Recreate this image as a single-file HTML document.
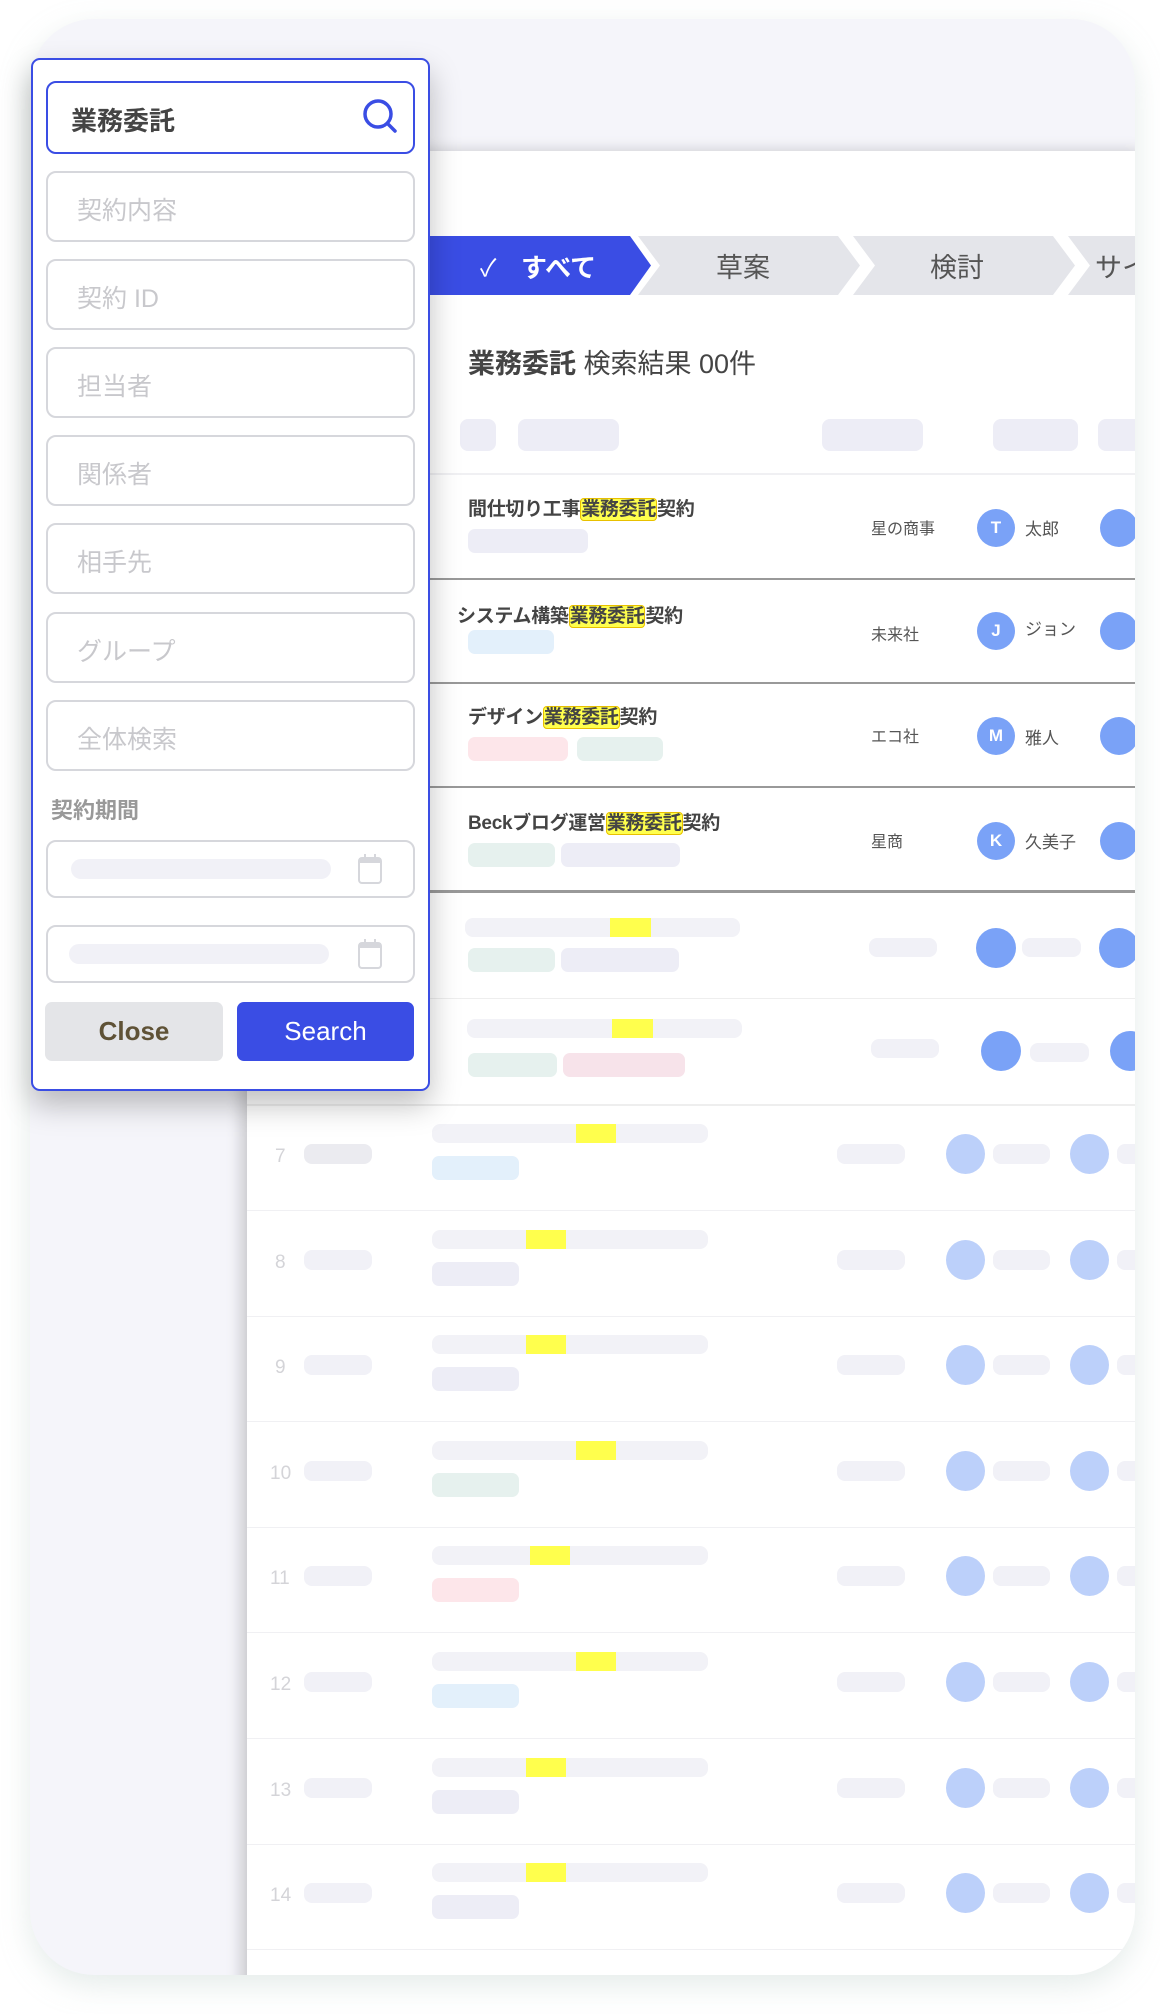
<!DOCTYPE html>
<html><head><meta charset="utf-8"><style>
*{margin:0;padding:0;box-sizing:border-box}
body{width:1160px;height:2014px;background:#fff;position:relative;overflow:hidden;font-family:"Liberation Sans","Noto Sans CJK JP",sans-serif}
.a{position:absolute}
.card{left:30px;top:19px;width:1105px;height:1956px;border-radius:64px;background:#f5f5fa;overflow:hidden;box-shadow:0 10px 30px rgba(180,200,195,.35)}
.panel{left:217px;top:132px;width:900px;height:1900px;background:#fff;box-shadow:-6px 0 14px rgba(0,0,0,.18)}
.pill{position:absolute;background:#f1f1f7;border-radius:8px}
.bar{position:absolute;background:#f2f2f7;border-radius:8px;height:19px}
.yl{position:absolute;background:#ffff4d;height:19px;top:0}
.tag{position:absolute;border-radius:7px;height:24px}
.circ{position:absolute;border-radius:50%}
.fld{position:absolute;left:46px;width:369px;height:71px;border:2px solid #d6d7dc;border-radius:10px;font-size:25px;color:#c8c8cc;padding:18px 0 0 29px}
.t{position:absolute;font-size:19px;font-weight:bold;color:#444;letter-spacing:-0.3px}
.hl{background:#ffff4d;border:1.5px solid #e8c000;border-radius:4px}
.co{position:absolute;font-size:16px;color:#555}
.av{position:absolute;width:38px;height:38px;border-radius:50%;background:#7aa2f7;color:#fff;font-weight:bold;font-size:17px;text-align:center;line-height:38px}
.nm{position:absolute;font-size:17px;color:#555}
.num{position:absolute;font-size:19px;color:#d4d4d8}
</style></head><body>
<div class="a card">
 <div class="a panel"></div>
</div>
<div class="a" style="left:30px;top:19px;width:1105px;height:1956px;border-radius:64px;overflow:hidden">
 <div class="a" style="left:-30px;top:-19px;width:1160px;height:2014px">
  <svg class="a" style="left:0;top:0" width="1160" height="320">
   <polygon points="430,236 630,236 651,265.5 630,295 430,295" fill="#3a4de4"/>
   <polygon points="638,236 838,236 860,265.5 838,295 638,295 660,265.5" fill="#e4e5ea"/>
   <polygon points="853,236 1053,236 1075,265.5 1053,295 853,295 875,265.5" fill="#e4e5ea"/>
   <polygon points="1068,236 1268,236 1290,265.5 1268,295 1068,295 1090,265.5" fill="#e4e5ea"/>
   <text x="480" y="276" font-size="24" fill="#fff" font-family="Liberation Sans,Noto Sans CJK JP,sans-serif">✓</text>
   <text x="521" y="277" font-size="26" font-weight="bold" fill="#fff" font-family="Liberation Sans,Noto Sans CJK JP,sans-serif">すべて</text>
   <text x="716" y="277" font-size="27" fill="#555" font-family="Liberation Sans,Noto Sans CJK JP,sans-serif">草案</text>
   <text x="930" y="277" font-size="27" fill="#555" font-family="Liberation Sans,Noto Sans CJK JP,sans-serif">検討</text>
   <text x="1095" y="277" font-size="27" fill="#555" font-family="Liberation Sans,Noto Sans CJK JP,sans-serif">サイン</text>
  </svg>
  <div class="a" style="left:468px;top:342px;font-size:27px;color:#444"><b>業務委託</b> 検索結果 00件</div>
  <div class="pill" style="left:460px;top:419px;width:36px;height:32px;background:#ededf6"></div>
  <div class="pill" style="left:518px;top:419px;width:101px;height:32px;background:#ededf6"></div>
  <div class="pill" style="left:822px;top:419px;width:101px;height:32px;background:#ededf6"></div>
  <div class="pill" style="left:993px;top:419px;width:85px;height:32px;background:#ededf6"></div>
  <div class="pill" style="left:1098px;top:419px;width:60px;height:32px;background:#ededf6"></div>
  <div class="a" style="left:430px;top:473px;width:710px;height:2px;background:#f0f0f3"></div>

  <div class="t" style="left:468px;top:494px">間仕切り工事<span class="hl">業務委託</span>契約</div>
  <div class="tag" style="left:468px;top:529px;width:120px;background:#ededf6"></div>
  <div class="co" style="left:871px;top:515px">星の商事</div>
  <div class="av" style="left:977px;top:509px">T</div>
  <div class="nm" style="left:1025px;top:515px">太郎</div>
  <div class="circ" style="left:1100px;top:509px;width:38px;height:38px;background:#7aa2f7"></div>
  <div class="a" style="left:430px;top:578px;width:710px;height:1.5px;background:#999"></div>

  <div class="t" style="left:457px;top:601px">システム構築<span class="hl">業務委託</span>契約</div>
  <div class="tag" style="left:468px;top:630px;width:86px;background:#e3f0fb"></div>
  <div class="co" style="left:871px;top:621px">未来社</div>
  <div class="av" style="left:977px;top:612px">J</div>
  <div class="nm" style="left:1025px;top:615px">ジョン</div>
  <div class="circ" style="left:1100px;top:612px;width:38px;height:38px;background:#7aa2f7"></div>
  <div class="a" style="left:430px;top:682px;width:710px;height:1.5px;background:#999"></div>

  <div class="t" style="left:468px;top:702px">デザイン<span class="hl">業務委託</span>契約</div>
  <div class="tag" style="left:468px;top:737px;width:100px;background:#fde6ea"></div>
  <div class="tag" style="left:577px;top:737px;width:86px;background:#e6f1ee"></div>
  <div class="co" style="left:871px;top:723px">エコ社</div>
  <div class="av" style="left:977px;top:717px">M</div>
  <div class="nm" style="left:1025px;top:724px">雅人</div>
  <div class="circ" style="left:1100px;top:717px;width:38px;height:38px;background:#7aa2f7"></div>
  <div class="a" style="left:430px;top:786px;width:710px;height:1.5px;background:#999"></div>

  <div class="t" style="left:468px;top:808px">Beckブログ運営<span class="hl">業務委託</span>契約</div>
  <div class="tag" style="left:468px;top:843px;width:87px;background:#e6f1ee"></div>
  <div class="tag" style="left:561px;top:843px;width:119px;background:#ededf6"></div>
  <div class="co" style="left:871px;top:828px">星商</div>
  <div class="av" style="left:977px;top:822px">K</div>
  <div class="nm" style="left:1025px;top:828px">久美子</div>
  <div class="circ" style="left:1100px;top:822px;width:38px;height:38px;background:#7aa2f7"></div>
  <div class="a" style="left:430px;top:890px;width:710px;height:3px;background:#999"></div>

  <div class="bar" style="left:465px;top:918px;width:275px"><div class="yl" style="left:145px;width:41px"></div></div>
  <div class="tag" style="left:468px;top:948px;width:87px;background:#e6f1ee"></div>
  <div class="tag" style="left:561px;top:948px;width:118px;background:#ededf6"></div>
  <div class="pill" style="left:869px;top:938px;width:68px;height:19px"></div>
  <div class="circ" style="left:976px;top:928px;width:40px;height:40px;background:#7aa2f7"></div>
  <div class="pill" style="left:1022px;top:938px;width:59px;height:19px"></div>
  <div class="circ" style="left:1099px;top:928px;width:40px;height:40px;background:#7aa2f7"></div>
  <div class="a" style="left:430px;top:998px;width:710px;height:1px;background:#eee"></div>
  <div class="bar" style="left:467px;top:1019px;width:275px"><div class="yl" style="left:145px;width:41px"></div></div>
  <div class="tag" style="left:468px;top:1053px;width:89px;background:#e6f1ee"></div>
  <div class="tag" style="left:563px;top:1053px;width:122px;background:#f7e3ea"></div>
  <div class="pill" style="left:871px;top:1039px;width:68px;height:19px"></div>
  <div class="circ" style="left:981px;top:1031px;width:40px;height:40px;background:#7aa2f7"></div>
  <div class="pill" style="left:1030px;top:1043px;width:59px;height:19px"></div>
  <div class="circ" style="left:1110px;top:1031px;width:40px;height:40px;background:#7aa2f7"></div>
  <div class="a" style="left:247px;top:1104px;width:890px;height:2px;background:#eee"></div>
  <div id="rows"></div>
 </div>
</div>

<div class="a" style="left:31px;top:58px;width:399px;height:1033px;background:#fff;border:2px solid #3a4de4;border-radius:9px;box-shadow:0 14px 30px rgba(0,0,0,.25)"></div>
<div class="a" style="left:46px;top:81px;width:369px;height:73px;border:2px solid #3a4de4;border-radius:10px;font-size:26px;font-weight:bold;color:#444;padding:18px 0 0 23px">業務委託</div>
<svg class="a" style="left:360px;top:96px" width="40" height="40" viewBox="0 0 40 40"><circle cx="18" cy="18" r="13" fill="none" stroke="#3a4de4" stroke-width="3.5"/><line x1="27.5" y1="27.5" x2="35" y2="35" stroke="#3a4de4" stroke-width="3.5" stroke-linecap="round"/></svg>
<div class="fld" style="top:171px">契約内容</div>
<div class="fld" style="top:259px">契約 ID</div>
<div class="fld" style="top:347px">担当者</div>
<div class="fld" style="top:435px">関係者</div>
<div class="fld" style="top:523px">相手先</div>
<div class="fld" style="top:612px">グループ</div>
<div class="fld" style="top:700px">全体検索</div>
<div class="a" style="left:51px;top:793px;font-size:22px;font-weight:bold;color:#999">契約期間</div>
<div class="fld" style="top:840px;height:58px"></div>
<div class="pill" style="left:71px;top:859px;width:260px;height:20px;border-radius:10px"></div>
<div class="fld" style="top:925px;height:58px"></div>
<div class="pill" style="left:69px;top:944px;width:260px;height:20px;border-radius:10px"></div>
<svg class="a" style="left:357px;top:852px" width="26" height="34" viewBox="0 0 26 34"><rect x="2" y="6" width="22" height="25" rx="3" fill="none" stroke="#d6d7dc" stroke-width="2"/><line x1="8" y1="2" x2="8" y2="10" stroke="#d6d7dc" stroke-width="2"/><line x1="18" y1="2" x2="18" y2="10" stroke="#d6d7dc" stroke-width="2"/><rect x="2" y="6" width="22" height="5" fill="#d6d7dc"/></svg>
<svg class="a" style="left:357px;top:937px" width="26" height="34" viewBox="0 0 26 34"><rect x="2" y="6" width="22" height="25" rx="3" fill="none" stroke="#d6d7dc" stroke-width="2"/><line x1="8" y1="2" x2="8" y2="10" stroke="#d6d7dc" stroke-width="2"/><line x1="18" y1="2" x2="18" y2="10" stroke="#d6d7dc" stroke-width="2"/><rect x="2" y="6" width="22" height="5" fill="#d6d7dc"/></svg>
<div class="a" style="left:45px;top:1002px;width:178px;height:59px;background:#e4e5e8;border-radius:7px;font-size:26px;font-weight:bold;color:#5f5236;text-align:center;line-height:59px">Close</div>
<div class="a" style="left:237px;top:1002px;width:177px;height:59px;background:#3a4de4;border-radius:7px;font-size:26px;color:#fff;text-align:center;line-height:59px">Search</div>

<script>
var tags=['#e3f0fb','#ededf6','#ededf6','#e6f1ee','#fde6ea','#e3f0fb','#ededf6','#ededf6'];
var yx=[576,526,526,576,530,576,526,526];
var h='';
for(var i=0;i<8;i++){
 var y=1106+i*105.6;
 h+='<div class="num" style="left:'+(i<3?275:270)+'px;top:'+(y+40)+'px">'+(i+7)+'</div>';
 h+='<div class="pill" style="left:304px;top:'+(y+38)+'px;width:68px;height:20px;background:'+(i==0?'#ebebf0':'#f1f1f7')+'"></div>';
 h+='<div class="bar" style="left:432px;top:'+(y+18)+'px;width:276px"><div class="yl" style="left:'+(yx[i]-432)+'px;width:40px"></div></div>';
 h+='<div class="tag" style="left:432px;top:'+(y+50)+'px;width:87px;background:'+tags[i]+'"></div>';
 h+='<div class="pill" style="left:837px;top:'+(y+38)+'px;width:68px;height:20px"></div>';
 h+='<div class="circ" style="left:946px;top:'+(y+28)+'px;width:39px;height:40px;background:#bcd0fa"></div>';
 h+='<div class="pill" style="left:993px;top:'+(y+38)+'px;width:57px;height:20px"></div>';
 h+='<div class="circ" style="left:1070px;top:'+(y+28)+'px;width:39px;height:40px;background:#bcd0fa"></div>';
 h+='<div class="pill" style="left:1117px;top:'+(y+38)+'px;width:30px;height:20px"></div>';
 h+='<div class="a" style="left:247px;width:890px;height:1px;background:#f0f0f3;top:'+(y+104)+'px"></div>';
}
document.getElementById('rows').innerHTML=h;
</script>
</body></html>
